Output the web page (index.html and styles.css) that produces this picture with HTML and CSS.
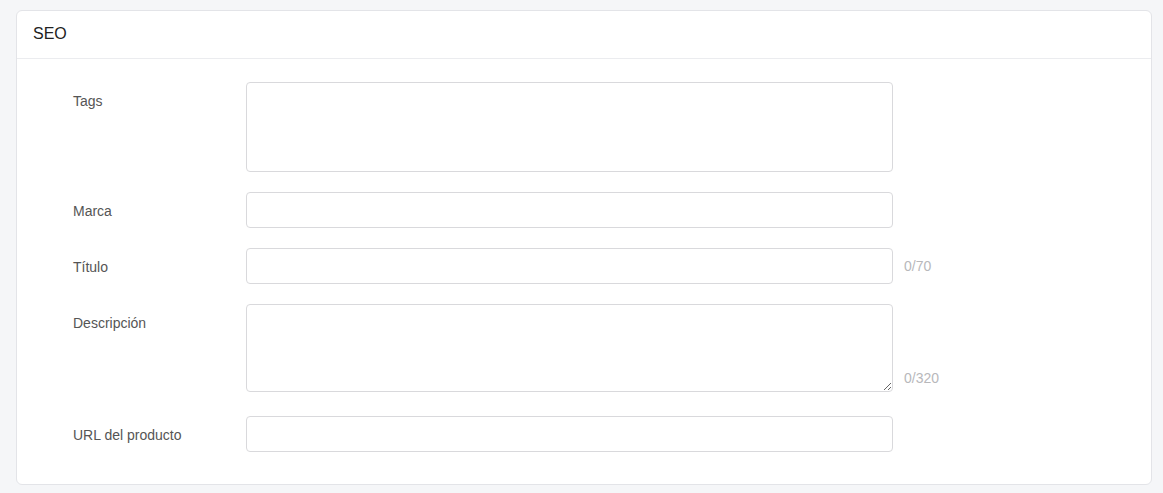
FILE: index.html
```html
<!DOCTYPE html>
<html lang="es">
<head>
<meta charset="utf-8">
<title>SEO</title>
<link rel="stylesheet" href="styles.css">
</head>
<body>
<section class="card">
  <header class="card-header">SEO</header>
  <div class="card-body">
    <div class="row">
      <label class="label">Tags</label>
      <div class="field"><textarea class="control tags"></textarea></div>
    </div>
    <div class="row">
      <label class="label">Marca</label>
      <div class="field"><input class="control input" type="text"></div>
    </div>
    <div class="row">
      <label class="label">Título</label>
      <div class="field center"><input class="control input" type="text"><span class="counter">0/70</span></div>
    </div>
    <div class="row">
      <label class="label">Descripción</label>
      <div class="field bottom"><textarea class="control desc"></textarea><span class="counter">0/320</span></div>
    </div>
    <div class="row">
      <label class="label">URL del producto</label>
      <div class="field"><input class="control input" type="text"></div>
    </div>
  </div>
</section>
</body>
</html>
```
FILE: styles.css
```css
html, body {
  margin: 0;
  padding: 0;
}
body {
  background: #f5f6f8;
  font-family: "Liberation Sans", Arial, sans-serif;
  padding: 10px 11px 8px 16px;
}
.card {
  background: #fff;
  border: 1px solid #e3e4e8;
  border-radius: 6px;
  height: 475px;
  box-sizing: border-box;
}
.card-header {
  height: 48px;
  box-sizing: border-box;
  border-bottom: 1px solid #ebecef;
  padding: 13px 16px;
  font-size: 16px;
  line-height: 20px;
  color: #222;
}
.card-body {
  padding: 23px 0 0 56px;
  display: flex;
  flex-direction: column;
  gap: 20px;
}
.row {
  display: flex;
  align-items: flex-start;
}
.label {
  width: 173px;
  flex: none;
  font-size: 14px;
  line-height: 20px;
  padding-top: 9px;
  color: #555;
}
.field {
  display: flex;
  align-items: flex-start;
}
.field.center {
  align-items: center;
}
.field.bottom {
  align-items: flex-end;
}
.control {
  display: block;
  width: 647px;
  box-sizing: border-box;
  border: 1px solid #d9d9dc;
  border-radius: 4px;
  background: #fff;
  margin: 0;
  font-family: inherit;
  font-size: 14px;
  outline: none;
}
.tags {
  height: 90px;
  resize: none;
}
.desc {
  height: 88px;
  resize: vertical;
}
.input {
  height: 36px;
}
.row:nth-child(4) {
  margin-bottom: 4px;
}
.counter {
  margin-left: 11px;
  font-size: 14px;
  line-height: 20px;
  color: #b8b8bb;
}
.field.bottom .counter {
  margin-bottom: 4px;
}
```
